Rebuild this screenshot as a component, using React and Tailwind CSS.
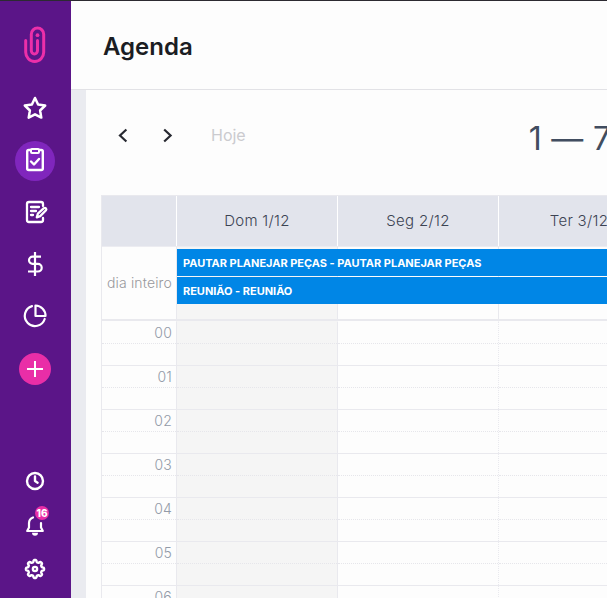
import React from "react";

function Icon({ children, width = 2 }) {
  return (
    <svg
      className="size-10 shrink-0"
      viewBox="0 0 40 40"
      fill="none"
      stroke="#fff"
      strokeWidth={width}
      strokeLinecap="round"
      strokeLinejoin="round"
    >
      {children}
    </svg>
  );
}

function Slot({ children, small }) {
  return (
    <div className={"flex shrink-0 items-center justify-center " + (small ? "h-11" : "h-[52px]")}>
      {children}
    </div>
  );
}

function gearPath() {
  const points = [];
  for (let i = 0; i <= 144; i++) {
    const a = (i / 144) * Math.PI * 2;
    const r = 8 + 1.1 * Math.tanh(2 * Math.cos(8 * a));
    points.push((20 + r * Math.cos(a)).toFixed(2) + " " + (20 + r * Math.sin(a)).toFixed(2));
  }
  return "M" + points.join("L") + "Z";
}

function Sidebar() {
  return (
    <nav className="flex w-[71px] shrink-0 flex-col bg-[#5b1588] pr-px">
      <div className="flex h-[81px] shrink-0 justify-center pt-6">
        <svg className="h-10 w-6" viewBox="0 0 24 40" fill="none" stroke="#ec2fa9" strokeWidth="3" strokeLinecap="round">
          <path d="M2.7 15.5v11.8a9 9.2 0 0 0 18 0V9.2a6.2 6.2 0 0 0-12.4 0v16.3a3.1 3.4 0 0 0 6.2 0V15.5" />
          <circle cx="14.5" cy="10.2" r="1.9" fill="#ec2fa9" stroke="none" />
        </svg>
      </div>
      <Slot>
        <Icon width={2.5}>
          <path d="m20 10 3.1 6.5 7.1 1-5.1 5 1.2 7.1-6.3-3.3-6.3 3.3 1.2-7.1-5.1-5 7.1-1z" />
        </Icon>
      </Slot>
      <Slot>
        <div className="mt-0.5 size-10 rounded-full bg-[#8026bd]">
          <Icon width={2.4}>
            <rect x="12.2" y="9" width="15.6" height="20" rx="1.5" />
            <rect x="16" y="8" width="8" height="4" rx="1" fill="#8026bd" strokeWidth="2" />
            <path d="m16 20.5 3 3 5-5.5" />
          </Icon>
        </div>
      </Slot>
      <Slot>
        <Icon width={2.3}>
          <path d="M28 14v-2a2 2 0 0 0-2-2H14a2 2 0 0 0-2 2v16a2 2 0 0 0 2 2h12a2 2 0 0 0 2-2v-2M16 15h8M16 19h5M16 23h2" />
          <path d="m21.8 25.3 1.1-3.6 6-5.5a1.5 1.5 0 0 1 2.1 2.1l-5.8 5.8z" />
        </Icon>
      </Slot>
      <Slot>
        <Icon width={2.2}>
          <path d="M20 8v24M26 12.7h-8.4a3.6 3.6 0 0 0 0 7.2h5.3a3.8 3.8 0 0 1 0 7.6H13" strokeLinecap="butt" />
        </Icon>
      </Slot>
      <Slot>
        <Icon width={2.2}>
          <path d="M17 10.1A10.2 10.2 0 1 0 29.7 23" />
          <path d="M20.5 9.5v10.5h10a10.2 10.2 0 0 0-10-10.5z" />
        </Icon>
      </Slot>
      <Slot>
        <div className="mt-0.5 flex size-8 items-center justify-center rounded-full bg-[#e92ea7]">
          <Icon>
            <path d="M20 12v16M12 20h16" strokeLinecap="butt" />
          </Icon>
        </div>
      </Slot>
      <div className="min-h-0 flex-1" />
      <Slot small>
        <Icon width={2.4}>
          <circle cx="20" cy="20" r="8" />
          <path d="M20 15.5V20l2.6 1.7" />
        </Icon>
      </Slot>
      <Slot small>
        <div className="relative">
          <Icon width={2.2}>
            <path d="M18 12.5a6 6 0 0 0-4 5.5v4.5L12.2 26h15.6L26 22.5v-4.5" />
            <path d="M17 27.8h6a3 3 0 0 1-6 0z" fill="#fff" stroke="none" />
          </Icon>
          <span className="absolute left-[20px] top-px flex h-3.5 w-3.5 items-center justify-center rounded-full bg-[#e92ea7] text-[10px] font-extrabold leading-none text-white">
            16
          </span>
        </div>
      </Slot>
      <Slot small>
        <Icon width={2.4}>
          <path d={gearPath()} />
          <circle cx="20" cy="20" r="2.1" />
        </Icon>
      </Slot>
      <div className="h-[7px] shrink-0" />
    </nav>
  );
}

const DAYS = ["Dom 1/12", "Seg 2/12", "Ter 3/12"];
const HOURS = ["00", "01", "02", "03", "04", "05", "06"];
const EVENTS = ["PAUTAR PLANEJAR PEÇAS - PAUTAR PLANEJAR PEÇAS", "REUNIÃO - REUNIÃO"];

function Calendar() {
  return (
    <div className="ml-[15px] w-[560px] border-l border-t border-[#e9e9ee]">
      <div className="flex h-[51px] border-b border-[#ececf1] bg-[#e2e4ec]">
        <div className="w-[74px] shrink-0" />
        {DAYS.map((day) => (
          <div
            key={day}
            className="flex w-[161px] shrink-0 items-center justify-center border-l border-white text-[15px] font-light tracking-[0.3px] text-[#3c4353]"
          >
            {day}
          </div>
        ))}
      </div>
      <div className="relative flex h-[74px] border-b-2 border-[#e9e9ee]">
        <div className="flex w-[74px] shrink-0 items-center justify-end pr-1 text-[14px] font-light text-[#98989c]">
          <span className="-mt-0.5 whitespace-nowrap tracking-[0.15px]">dia inteiro</span>
        </div>
        {DAYS.map((day, i) => (
          <div
            key={day}
            className={"w-[161px] shrink-0 border-l border-[#e9e9ee] " + (i === 0 ? "bg-[#f5f5f5]" : "")}
          />
        ))}
        <div className="absolute left-[75px] right-0 top-0.5 flex flex-col gap-px">
          {EVENTS.map((event) => (
            <div
              key={event}
              className="flex h-[27px] items-center whitespace-nowrap bg-[#0086e6] pl-1.5 pt-0.5 text-[11px] font-bold tracking-[-0.02px] text-white"
            >
              {event}
            </div>
          ))}
        </div>
      </div>
      {HOURS.map((hour, row) => (
        <div key={hour} className="flex h-11">
          <div className={"w-[74px] shrink-0 border-t " + (row ? "border-[#e9e9ee]" : "border-transparent")}>
            <div className="flex h-[22px] items-center justify-end border-b border-dotted border-[#e6e6eb] pb-px pr-1 text-[14px] font-light tracking-[0.2px] text-[#929aa8]">
              {hour}
            </div>
          </div>
          {DAYS.map((day, i) => (
            <div
              key={day}
              className={
                "w-[161px] shrink-0 border-l border-t border-l-[#e9e9ee] " +
                (row ? "border-t-[#e9e9ee] " : "border-t-transparent ") +
                (i === 0 ? "bg-[#f5f5f5]" : i === 2 ? "[border-left-style:dotted]" : "")
              }
            >
              <div className="h-[22px] border-b border-dotted border-[#e6e6eb]" />
            </div>
          ))}
        </div>
      ))}
    </div>
  );
}

function Chevron({ d }) {
  return (
    <svg className="h-4 w-3" viewBox="0 0 12 16" fill="none" stroke="#272931" strokeWidth="2.2">
      <path d={d} />
    </svg>
  );
}

export default function App() {
  return (
    <div className="flex h-[598px] w-[607px] flex-col overflow-hidden bg-[#fdfdfd] font-[Inter,sans-serif]">
      <div className="h-px shrink-0 bg-[#2c2a31]" />
      <div className="flex min-h-0 flex-1">
        <Sidebar />
        <div className="flex min-w-0 flex-1 flex-col">
          <header className="flex h-[89px] shrink-0 items-center border-b border-[#e2e2e6] pl-8 pt-[3px]">
            <h1 className="text-[24px] font-semibold leading-8 text-[#1b1d23]">Agenda</h1>
          </header>
          <div className="flex min-h-0 flex-1">
            <div className="w-[15px] shrink-0 bg-[#eaebf0]" />
            <main className="min-w-0 flex-1 overflow-hidden">
              <div className="flex h-[105px] items-start whitespace-nowrap pl-[31px] pt-[29px]">
                <div className="flex h-8 items-center">
                  <Chevron d="M9.4 2.5 3 8.5l6.4 6" />
                  <span className="w-[33px]" />
                  <Chevron d="m2.2 2.5 6.4 6-6.4 6" />
                </div>
                <span className="ml-[37px] text-[16px] leading-8 text-[#cbcbcf]">Hoje</span>
                <span className="ml-[283px] pt-[2px] text-[32px] leading-9 tracking-[0.3px] text-[#414d60]">1 — 7</span>
              </div>
              <Calendar />
            </main>
          </div>
        </div>
      </div>
    </div>
  );
}
